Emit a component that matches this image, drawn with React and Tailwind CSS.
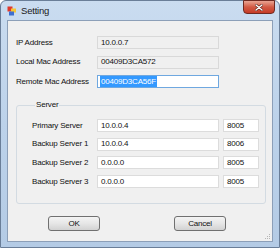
import React from 'react';

const font = { fontFamily: '"Liberation Sans", Arial, sans-serif' };

function Field({ value, readOnly, selected, width = 'w-[122px]' }) {
  return (
    <div
      className={`${width} h-[13px] flex items-center px-[3px] border text-[8px] leading-none ${
        readOnly
          ? 'bg-[#f0f0f0] border-[#d9d9d9]'
          : selected
          ? 'bg-white border-[#6fa8e0]'
          : 'bg-white border-[#dcdcdc]'
      }`}
    >
      {selected ? (
        <span className="bg-[#3399ff] text-white h-[11px] flex items-center -ml-[1px] px-[1px]">{value}</span>
      ) : (
        <span className="text-[#111]">{value}</span>
      )}
    </div>
  );
}

function Button({ children }) {
  return (
    <button className="w-[52px] h-[15px] rounded-[3px] border border-[#707070] bg-linear-to-b from-[#f4f4f4] via-[#e6e6e6] to-[#d2d2d2] text-[8px] text-[#111] leading-none flex items-center justify-center">
      {children}
    </button>
  );
}

const servers = [
  { label: 'Primary Server', ip: '10.0.0.4', port: '8005' },
  { label: 'Backup Server 1', ip: '10.0.0.4', port: '8006' },
  { label: 'Backup Server 2', ip: '0.0.0.0', port: '8005' },
  { label: 'Backup Server 3', ip: '0.0.0.0', port: '8005' },
];

export default function App() {
  return (
    <div
      style={font}
      className="w-[280px] h-[248px] flex flex-col border border-[#6a7e98] rounded-t-[6px] bg-linear-to-b from-[#cadcf0] via-[#bcd2ea] to-[#b4cbe5] tracking-[-0.2px]"
    >
      {/* title bar */}
      <div className="h-[19px] flex items-start shrink-0">
        <svg width="10" height="10" viewBox="0 0 10 10" className="ml-[6px] mt-[5px]">
          <rect x="0.5" y="0.5" width="5" height="5" fill="#e0392b" />
          <rect x="4" y="2.5" width="5" height="4" fill="#f6c635" />
          <rect x="2" y="5.5" width="5" height="4" fill="#3d6fd1" />
        </svg>
        <span className="ml-[4px] mt-[5px] text-[9.5px] leading-[10px] text-[#1a1a1a]">Setting</span>
        <div className="ml-auto mr-[4px] w-[32px] h-[14px] -mt-[1px] rounded-b-[4px] border border-[#6e2a22] bg-linear-to-b from-[#e8a493] via-[#d25a45] to-[#c53a25] flex items-center justify-center">
          <svg width="8" height="7" viewBox="0 0 8 7">
            <path d="M1 1 L7 6 M7 1 L1 6" stroke="#5a2018" strokeWidth="2.6" strokeLinecap="round" />
            <path d="M1 1 L7 6 M7 1 L1 6" stroke="#ffffff" strokeWidth="1.4" strokeLinecap="round" />
          </svg>
        </div>
      </div>

      {/* client area */}
      <div className="flex-1 mx-[6px] mb-[5px] border border-[#8c9fb8] bg-[#f0f0f0] relative text-[#111] text-[8px] leading-none">
        <div className="pt-[15px] pl-[8px] flex flex-col gap-[6.5px]">
          <div className="flex items-center">
            <span className="w-[81px]">IP Address</span>
            <Field value="10.0.0.7" readOnly />
          </div>
          <div className="flex items-center">
            <span className="w-[81px]">Local Mac Address</span>
            <Field value="00409D3CA572" readOnly />
          </div>
          <div className="flex items-center">
            <span className="w-[81px]">Remote Mac Address</span>
            <Field value="00409D3CA56F" selected />
          </div>
        </div>

        <fieldset className="ml-[8px] mt-[12px] w-[250px] border border-[#d3dbe2] rounded-[3px] pl-[15px] pb-[15px]">
          <legend className="ml-[3px] px-[1px] h-[10px] leading-[10px]">Server</legend>
          <div className="pt-[9px] flex flex-col gap-[5.7px]">
            {servers.map((s) => (
              <div key={s.label} className="flex items-center">
                <span className="w-[65px]">{s.label}</span>
                <Field value={s.ip} width="w-[122px]" />
                <Field value={s.port} width="w-[36px] ml-[4px]" />
              </div>
            ))}
          </div>
        </fieldset>

        <div className="flex mt-[12px] ml-[40px] gap-[74px]">
          <Button>OK</Button>
          <Button>Cancel</Button>
        </div>

        {/* resize grip */}
        <svg width="8" height="8" viewBox="0 0 8 8" className="absolute right-[1px] bottom-[1px]">
          {[[6, 2], [6, 4], [4, 4], [6, 6], [4, 6], [2, 6]].map(([x, y]) => (
            <rect key={`${x}-${y}`} x={x} y={y} width="1" height="1" fill="#b5b5b5" />
          ))}
        </svg>
      </div>
    </div>
  );
}
